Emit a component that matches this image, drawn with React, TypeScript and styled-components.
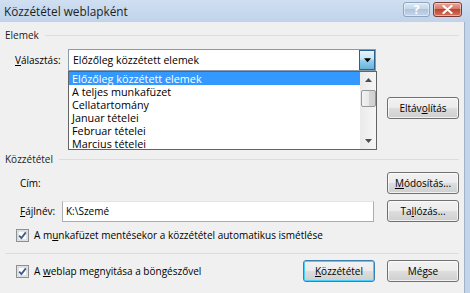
import React from 'react';
import styled, { createGlobalStyle } from 'styled-components';

/* ------------------------------------------------------------------ */
/* Alap                                                                */
/* ------------------------------------------------------------------ */

const GlobalStyle = createGlobalStyle`
  html, body {
    margin: 0;
    padding: 0;
    background: #c3d5ea;
  }
  * {
    box-sizing: border-box;
  }
`;

const FONT = `"Open Sans", "Noto Sans", "Liberation Sans", sans-serif`;

const Window = styled.div`
  width: 470px;
  height: 293px;
  display: flex;
  flex-direction: column;
  overflow: hidden;
  background: #c3d5ea;
  font-family: ${FONT};
  font-size: 10px;
  color: #000;
`;

/* ------------------------------------------------------------------ */
/* Címsor                                                              */
/* ------------------------------------------------------------------ */

const TitleBar = styled.div`
  height: 22px;
  flex: none;
  display: flex;
  align-items: flex-start;
  padding: 0 8px 0 4px;
  background: linear-gradient(#d0dff1, #c0d3ea);
`;

const Title = styled.div`
  flex: 1;
  font-size: 11.8px;
  line-height: 22px;
  color: #1e1e1e;
`;

const CaptionButton = styled.div<{ $close?: boolean }>`
  width: ${({ $close }) => ($close ? 29 : 27)}px;
  height: 15px;
  margin-top: 2px;
  margin-left: 3px;
  border: 1px solid ${({ $close }) => ($close ? '#7d3a33' : '#8fa4bd')};
  border-radius: 3px;
  display: flex;
  align-items: center;
  justify-content: center;
  color: #fff;
  font-size: 12px;
  font-weight: 700;
  background: ${({ $close }) =>
    $close
      ? 'linear-gradient(#e8a99c 0%, #d47a6a 45%, #c0432f 50%, #d3765f 100%)'
      : 'linear-gradient(#dde8f4 0%, #c5d6ea 45%, #afc4de 50%, #c6d6ea 100%)'};
  box-shadow: inset 0 0 0 1px rgba(255, 255, 255, 0.45);
`;

/* ------------------------------------------------------------------ */
/* Párbeszéd törzse                                                    */
/* ------------------------------------------------------------------ */

const Body = styled.div`
  flex: 1;
  margin-right: 5px;
  border-right: 1px solid #9fb4cc;
  background: #f0f0f0;
  padding: 6px 5px 0 5px;
  display: flex;
  flex-direction: column;
`;

const GroupHeader = styled.div<{ $top: number }>`
  display: flex;
  align-items: center;
  gap: 6px;
  height: 14px;
  margin-top: ${({ $top }) => $top}px;
  color: #1a1a1a;

  &::after {
    content: '';
    flex: 1;
    height: 1px;
    background: #d5dfe5;
  }
`;

const Row = styled.div<{ $top: number; $align?: string }>`
  display: flex;
  align-items: ${({ $align }) => $align ?? 'center'};
  margin-top: ${({ $top }) => $top}px;
`;

const Label = styled.div<{ $width: number; $indent: number; $lineHeight?: number }>`
  width: ${({ $width }) => $width}px;
  padding-left: ${({ $indent }) => $indent}px;
  line-height: ${({ $lineHeight }) => ($lineHeight ? `${$lineHeight}px` : 'normal')};
  flex: none;
  white-space: nowrap;
`;

const Key = styled.span`
  text-decoration: underline;
  text-underline-offset: 1px;
`;

/* ------------------------------------------------------------------ */
/* Kombinált lista                                                     */
/* ------------------------------------------------------------------ */

const ComboColumn = styled.div`
  width: 309px;
  flex: none;
  display: flex;
  flex-direction: column;
`;

const Combo = styled.div`
  width: 308px;
  height: 22px;
  display: flex;
  border: 1px solid #8a9aa9;
  background: #fff;
`;

const ComboText = styled.div`
  flex: 1;
  padding-left: 4px;
  line-height: 20px;
  font-size: 10.5px;
`;

const ComboButton = styled.div`
  width: 16px;
  height: 20px;
  border: 1px solid #2c628b;
  background: linear-gradient(#e5f4fc 0%, #c4e5f6 45%, #98d1ef 50%, #68b3db 100%);
  display: flex;
  align-items: center;
  justify-content: center;
`;

const ListBox = styled.div`
  width: 309px;
  height: 79px;
  display: flex;
  border: 1px solid #646464;
  background: #fff;
`;

const ListItems = styled.div`
  flex: 1;
  display: flex;
  flex-direction: column;
`;

const ListItem = styled.div<{ $selected?: boolean }>`
  height: 13px;
  line-height: 13px;
  padding-left: 3px;
  font-size: 10.8px;
  white-space: nowrap;
  background: ${({ $selected }) => ($selected ? '#3399ff' : 'transparent')};
  color: ${({ $selected }) => ($selected ? '#fff' : '#000')};
`;

const ScrollBar = styled.div`
  width: 16px;
  display: flex;
  flex-direction: column;
  align-items: center;
  background: linear-gradient(90deg, #eaeaea, #f6f6f6);
`;

const ScrollArrow = styled.div`
  height: 16px;
  display: flex;
  align-items: center;
  justify-content: center;
`;

const ScrollThumb = styled.div`
  width: 15px;
  height: 17px;
  margin-top: 2px;
  border: 1px solid #979797;
  border-radius: 2px;
  background: linear-gradient(90deg, #f3f3f3 0%, #e8e8e8 50%, #d6d6d6 51%, #d0d0d0 100%);
`;

const ScrollSpacer = styled.div`
  flex: 1;
`;

/* ------------------------------------------------------------------ */
/* Gombok, mezők                                                       */
/* ------------------------------------------------------------------ */

const Button = styled.div<{ $default?: boolean; $top?: number; $left?: number }>`
  width: 72px;
  height: 22px;
  flex: none;
  margin-top: ${({ $top }) => $top ?? 0}px;
  margin-left: ${({ $left }) => $left ?? 0}px;
  border: 1px solid ${({ $default }) => ($default ? '#3c7fb1' : '#707070')};
  border-radius: 3px;
  display: flex;
  align-items: center;
  justify-content: center;
  white-space: nowrap;
  background: linear-gradient(#f2f2f2 0%, #ebebeb 50%, #dddddd 51%, #cfcfcf 100%);
  box-shadow: ${({ $default }) =>
    $default ? 'inset 0 0 0 1px #48d2fb' : 'inset 0 0 0 1px rgba(255,255,255,0.7)'};
`;

const RightButtons = styled.div`
  margin-left: auto;
  display: flex;
  gap: 12px;
`;

const TextInput = styled.div`
  width: 312px;
  height: 21px;
  margin-left: 1px;
  border: 1px solid #abadb3;
  border-top-color: #e2e3ea;
  background: #fff;
  padding-left: 3px;
  line-height: 19px;
  margin-right: auto;
`;

const CheckRow = styled.div<{ $top: number }>`
  display: flex;
  align-items: center;
  gap: 5px;
  padding-left: 11px;
  margin-top: ${({ $top }) => $top}px;
  white-space: nowrap;
`;

const CheckText = styled.span``;

const Separator = styled.div`
  height: 1px;
  margin-top: 11px;
  background: #d5dfe5;
`;

const CheckBox = () => (
  <svg width="13" height="13" viewBox="0 0 13 13">
    <rect x="0.5" y="0.5" width="12" height="12" fill="#f4f4f4" stroke="#8e8f8f" />
    <rect x="2" y="2" width="9" height="9" fill="#fdfdfd" stroke="#c6cbd1" strokeWidth="1" />
    <path d="M3.2 6.6 L5.4 9 L9.8 3.4" fill="none" stroke="#3c5a8c" strokeWidth="1.8" />
  </svg>
);

const ArrowDown = () => (
  <svg width="7" height="5" viewBox="0 0 8 5">
    <path d="M0 0 H8 L4 4.5 Z" fill="#000" />
  </svg>
);

const ArrowUpSmall = () => (
  <svg width="7" height="4" viewBox="0 0 7 4">
    <path d="M0 4 H7 L3.5 0 Z" fill="#4d4d4d" />
  </svg>
);

const ArrowDownSmall = () => (
  <svg width="7" height="4" viewBox="0 0 7 4">
    <path d="M0 0 H7 L3.5 4 Z" fill="#4d4d4d" />
  </svg>
);

const CloseGlyph = () => (
  <svg width="11" height="9" viewBox="0 0 11 9">
    <path d="M1.5 1 L9.5 8 M9.5 1 L1.5 8" stroke="#fff" strokeWidth="2.2" strokeLinecap="round" />
  </svg>
);

/* ------------------------------------------------------------------ */
/* Adatok                                                              */
/* ------------------------------------------------------------------ */

const ITEMS = [
  'Előzőleg közzétett elemek',
  'A teljes munkafüzet',
  'Cellatartomány',
  'Januar tételei',
  'Februar tételei',
  'Marcius tételei',
];

/* ------------------------------------------------------------------ */
/* Komponens                                                           */
/* ------------------------------------------------------------------ */

export default function App() {
  return (
    <Window>
      <GlobalStyle />
      <TitleBar>
        <Title>Közzététel weblapként</Title>
        <CaptionButton>?</CaptionButton>
        <CaptionButton $close>
          <CloseGlyph />
        </CaptionButton>
      </TitleBar>

      <Body>
        {/* Elemek */}
        <GroupHeader $top={0}>Elemek</GroupHeader>
        <Row $top={7} $align="flex-start">
          <Label $width={63} $indent={10} $lineHeight={22}>
            <Key>V</Key>álasztás:
          </Label>
          <ComboColumn>
            <Combo>
              <ComboText>Előzőleg közzétett elemek</ComboText>
              <ComboButton>
                <ArrowDown />
              </ComboButton>
            </Combo>
            <ListBox>
              <ListItems>
                {ITEMS.map((item, i) => (
                  <ListItem key={item} $selected={i === 0}>
                    {item}
                  </ListItem>
                ))}
              </ListItems>
              <ScrollBar>
                <ScrollArrow>
                  <ArrowUpSmall />
                </ScrollArrow>
                <ScrollThumb />
                <ScrollSpacer />
                <ScrollArrow>
                  <ArrowDownSmall />
                </ScrollArrow>
              </ScrollBar>
            </ListBox>
          </ComboColumn>
          <Button $top={48} $left={10}>
            Eltáv<Key>o</Key>lítás
          </Button>
        </Row>

        {/* Közzététel */}
        <GroupHeader $top={2}>Közzététel</GroupHeader>
        <Row $top={6}>
          <Label $width={56} $indent={15}>
            Cím:
          </Label>
          <RightButtons>
            <Button>
              <Key>M</Key>ódosítás...
            </Button>
          </RightButtons>
        </Row>
        <Row $top={6}>
          <Label $width={56} $indent={15}>
            <Key>F</Key>ájlnév:
          </Label>
          <TextInput>K:\Szemé</TextInput>
          <Button>
            Ta<Key>l</Key>lózás...
          </Button>
        </Row>
        <CheckRow $top={6}>
          <CheckBox />
          <CheckText>
            A m<Key>u</Key>nkafüzet mentésekor a közzététel automatikus ismétlése
          </CheckText>
        </CheckRow>

        <Separator />

        <Row $top={6}>
          <CheckRow $top={0}>
            <CheckBox />
            <CheckText>
              A <Key>w</Key>eblap megnyitása a böngészővel
            </CheckText>
          </CheckRow>
          <RightButtons>
            <Button $default>
              <Key>K</Key>özzététel
            </Button>
            <Button>Mégse</Button>
          </RightButtons>
        </Row>
      </Body>
    </Window>
  );
}
